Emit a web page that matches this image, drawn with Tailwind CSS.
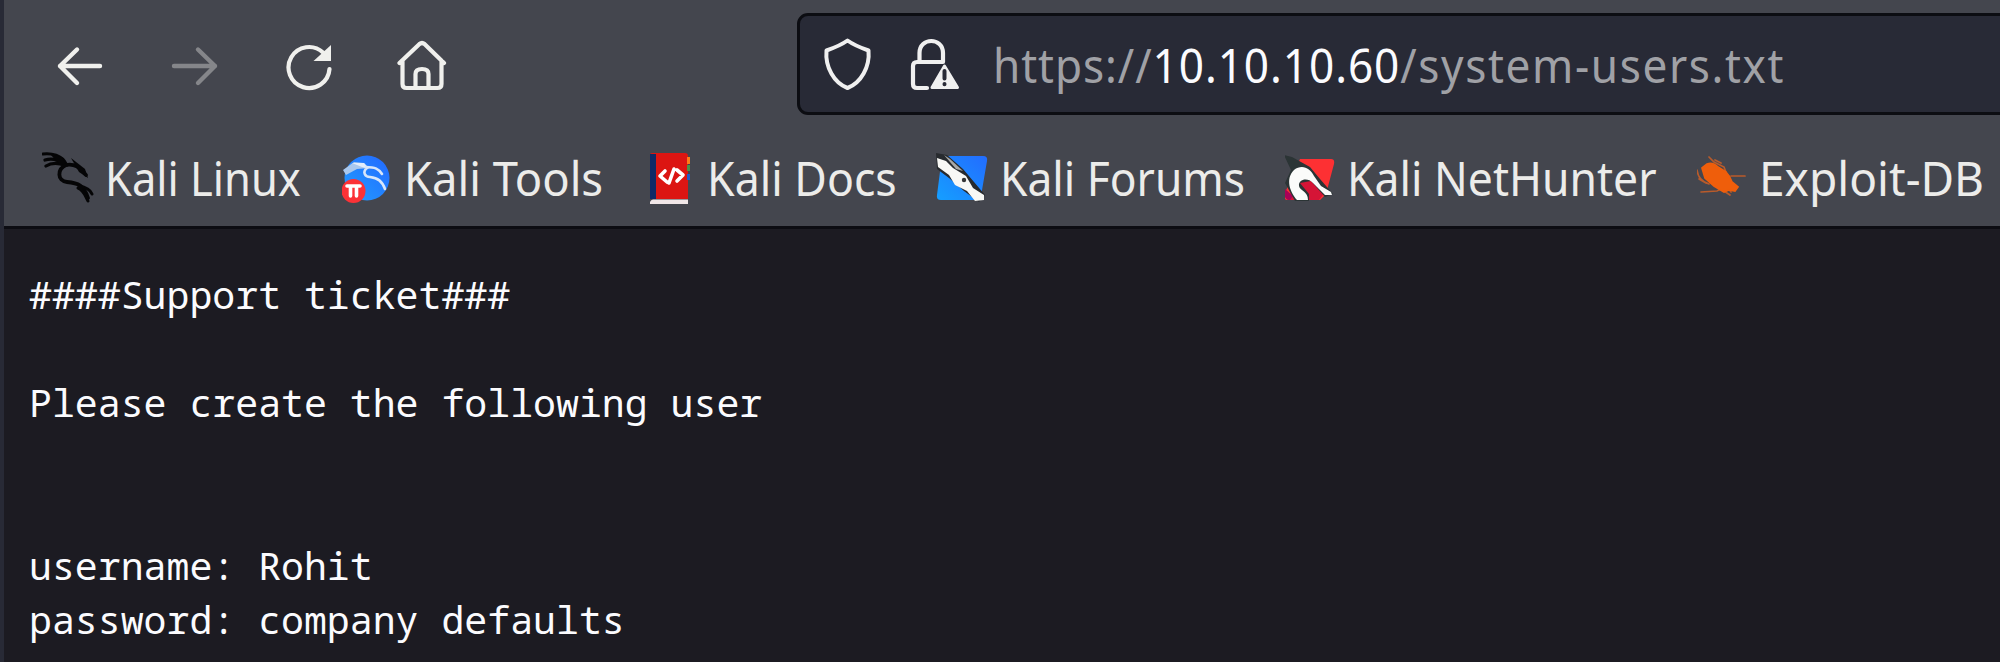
<!DOCTYPE html>
<html lang="en">
<head>
<meta charset="utf-8">
<title>system-users.txt</title>
<script src="https://cdn.jsdelivr.net/npm/@tailwindcss/browser@4"></script>
</head>
<body class="w-[2000px] h-[662px] overflow-hidden flex bg-[#282a36] font-['Noto_Sans',sans-serif]">
<div class="w-[4px] shrink-0 bg-[#282a36]"></div>
<div class="w-[1996px] flex flex-col">
  <header class="h-[229px] shrink-0 bg-[#44464e] border-b-3 border-[#0c0c12]">
    <nav class="flex h-[131px] pt-[13px]">
      <div class="w-[793px] shrink-0 flex pl-[52px] pt-[27px]">
        <svg class="w-[52px] h-[52px] mr-[62px]" viewBox="0 0 52 52" fill="none" stroke="#f0f0ed" stroke-width="4.400" stroke-linecap="round" stroke-linejoin="round"><path d="M44 26H4M21 9.500L4 26l17 17"/></svg>
        <svg class="w-[52px] h-[52px] mr-[61px]" viewBox="0 0 52 52" fill="none" stroke="#85868a" stroke-width="4.400" stroke-linecap="round" stroke-linejoin="round"><path d="M4 26h41M28 9.500L45 26L28 43"/></svg>
        <svg class="w-[52px] h-[52px] mr-[60px]" viewBox="0 0 52 52" fill="none" stroke="#f0f0ed" stroke-width="4.200" stroke-linecap="round"><path d="M40 12.500A20.500 20.500 0 1 0 46.500 29"/><path d="M48 5v16H30.500z" fill="#f0f0ed" stroke="none"/></svg>
        <svg class="w-[52px] h-[52px]" viewBox="0 0 52 52" fill="none" stroke="#f0f0ed" stroke-width="4.200" stroke-linecap="round" stroke-linejoin="round"><path d="M4.500 23L24.500 4q2.500-2 5 0L49 23M7.500 20.500V44q0 4 4 4h31q4 0 4-4V20.500M20.500 48V34q0-5 6.500-5t6.500 5v14"/></svg>
      </div>
      <div class="h-[102px] w-[1220px] shrink-0 flex rounded-[11px] border-3 border-[#0c0d12] bg-[#282a36]">
        <svg class="w-[52px] h-[56px] ml-[22px] mt-[20px]" viewBox="0 0 52 56" fill="none" stroke="#f0f0f0" stroke-width="4" stroke-linejoin="round"><path d="M25.500 4.500C31 8.500 38 11.500 46.500 14.500C48 31 39 47 25.500 52C12 47 3 31 4.500 14.500C13 11.500 20 8.500 25.500 4.500Z"/></svg>
        <svg class="w-[52px] h-[56px] ml-[36px] mt-[20px]" viewBox="0 0 52 56" fill="none" stroke="#f0f0f0" stroke-width="4.200" stroke-linejoin="round" stroke-linecap="round"><path d="M9.500 26V17C9.500 1 33 1 33 17V26M33 26H7q-4 0-4 4V48q0 4 4 4H17"/><path d="M34.500 30L47.500 51.500H22z" fill="#f0f0f0" stroke-width="3"/><path d="M34.500 35v7.500M34.500 48v.2" stroke="#282a36" stroke-width="4"/></svg>
        <div class="ml-[31px] w-[820px] h-[96px] pt-px leading-[96px] text-[48px] whitespace-pre text-[#a0a1a6]"><span class="block w-max origin-left scale-x-[.92] tracking-[1px]">https://<span class="text-[#fbfbfe]">10.10.10.60</span><span class="tracking-[1.75px]">/system-users.txt</span></span></div>
      </div>
    </nav>
    <div class="flex h-[95px] pl-[38px] pt-[21px] text-[48px] text-[#ececea] whitespace-pre">
      <div class="flex w-[300px] shrink-0">
        <svg class="w-[52px] h-[52px] mr-[11px] shrink-0" viewBox="0 0 52 52" fill="none" stroke="#050506" stroke-linecap="round" stroke-linejoin="round"><path d="M1 2C9 1 20 3 24 12M3 8C10 6 17 8 23 12M4 14C10 10 17 11 23 13" stroke-width="3.200"/><path d="M8 2L20 5L26 15L18 13z" fill="#050506" stroke="none"/><path d="M24 13C35 11 39 18 44 23M24 13C15 17 15 29 25 30C36 31 42 33 46 46" stroke-width="3.800"/><path d="M29 6L43 17L46 26L37 20z" fill="#050506" stroke="none"/><path d="M37 34C43 35 48 37 50 42M36 36C42 38 43 44 46 49" stroke-width="3"/></svg>
        <span class="block w-max leading-[51px] origin-left scale-x-[.906]">Kali Linux</span>
      </div>
      <div class="flex w-[303px] shrink-0">
        <svg class="w-[52px] h-[52px] mr-[10px] shrink-0" viewBox="0 0 52 52" fill="none" stroke-linecap="round"><defs><linearGradient id="globe" x1="1" y1="0" x2="0" y2="1"><stop offset="0" stop-color="#2368ff"/><stop offset="1" stop-color="#229eff"/></linearGradient></defs><circle cx="25" cy="26" r="22.500" fill="url(#globe)"/><path d="M1 18L12 10L22 11L27 16L15 17L4 23z" fill="#a9c8ee"/><path d="M10 11L22 11L27 17L20 15z" fill="#e3edfb"/><path d="M24 15C33 15 37 17 40 22M25 16C20 20 23 25 28 25C36 26 40 29 43 37" stroke="#d8e6fa" stroke-width="2.600"/><circle cx="11.500" cy="39" r="12" fill="#fb3237"/><path d="M5 34h13M8.500 34v10M14.500 34v10" stroke="#fff" stroke-width="3.600"/></svg>
        <span class="block w-max leading-[51px] origin-left scale-x-[.945]">Kali Tools</span>
      </div>
      <div class="flex w-[293px] shrink-0">
        <svg class="w-[52px] h-[52px] mr-[10px] shrink-0" viewBox="0 0 52 52"><path d="M5 3q0-2 2-2H40q3 0 3 3V47H5z" fill="#dc1512"/><path d="M5 2h6V47H5z" fill="#102a66"/><path d="M5 50q1-2.500 3-2.500H43v4.500H5z" fill="#f1e7e8"/><path d="M42 5h3v7h-3z" fill="#ff7b18"/><path d="M42 13h3v6h-3z" fill="#4c9147"/><path d="M42 22h3v6h-3z" fill="#245cc4"/><path d="M20 19L15 24L22 30M32 18L38 23L32 29M29 17L24 31" fill="none" stroke="#fff" stroke-width="3.600" stroke-linejoin="round" stroke-linecap="round"/></svg>
        <span class="block w-max leading-[51px] origin-left scale-x-[.93]">Kali Docs</span>
      </div>
      <div class="flex w-[347px] shrink-0">
        <svg class="w-[52px] h-[52px] mr-[10px] shrink-0 overflow-visible" viewBox="0 0 52 52"><defs><linearGradient id="bubble" x1="1" y1="0" x2="0" y2="1"><stop offset="0" stop-color="#236cff"/><stop offset="1" stop-color="#159fff"/></linearGradient></defs><path d="M4 4H45q5 0 4 5L43 44q-1 4-5 4H3q-5 0-4-5z" fill="url(#bubble)"/><path d="M-2 1L9 3L25 17L36 30L47 43L41 50L26 39L11 26L-1 17z" fill="#272a2e"/><path d="M-1 6L8 9L15 16L28 24L35 36L46 43L46 48L37 49L29 39L17 33L11 23L0 15z" fill="#f8f8f5"/><path d="M6 3L12 7L25 19L18 17z" fill="#a9a9a7"/><circle cx="26" cy="28" r="2.200" fill="#363636"/></svg>
        <span class="block w-max leading-[51px] origin-left scale-x-[.924]">Kali Forums</span>
      </div>
      <div class="flex w-[412px] shrink-0">
        <svg class="w-[52px] h-[52px] mr-[10px] shrink-0" viewBox="0 0 52 52"><path d="M15 7H46q4 0 3 5L41 42L35 48H2q-3 0-3-5L12 14z" fill="#fd3033"/><path d="M8 36L20 25L40 40L34 48H2z" fill="#d51436"/><path d="M0 37v8q1 3 5 3l3-4z" fill="#a80057"/><path d="M-1 3L7 5L25 15L35 27L48 42L40 45L26 29L15 31L24 42L24 49H10L0 31L6 18z" fill="#2b3435"/><path d="M9 18C17 12 25 16 29 24L36 34L46 40L47 43H40L28 31C23 25 13 27 14 34C15 39 23 39 23 48H12C5 40 0 27 9 18Z" fill="#fbfbfa"/></svg>
        <span class="block w-max leading-[51px] origin-left scale-x-[.927]">Kali NetHunter</span>
      </div>
      <div class="flex w-[300px] shrink-0">
        <svg class="w-[52px] h-[52px] mr-[10px] shrink-0" viewBox="0 0 52 52" fill="none" stroke="#b95b2b" stroke-width="1.700" stroke-linecap="round"><path d="M12 5L17 10L27 15L30 23M18 8L24 11M0 18C1 26 6 30 12 32M2 27L9 31M34 24L48 24M4 40L20 39L26 36M24 37L33 43M30 35L34 40"/><path d="M5 16L10 12Q16 10 21 15L29 20Q33 24 35 30L41 35L38 39L32 38L27 40L17 34L8 26Z" fill="#ef5e0b" stroke="#ef5e0b"/></svg>
        <span class="block w-max leading-[51px] origin-left scale-x-[.96]">Exploit-DB</span>
      </div>
    </div>
  </header>
  <main class="grow bg-[#1c1b22] pt-[38px] pl-[25px]">
    <pre class="font-['Noto_Sans_Mono','DejaVu_Sans_Mono',monospace] text-[38.2px] leading-[54.2px] text-[#fbfbfe]">####Support ticket###

Please create the following user


username: Rohit
password: company defaults</pre>
  </main>
</div>
</body>
</html>
